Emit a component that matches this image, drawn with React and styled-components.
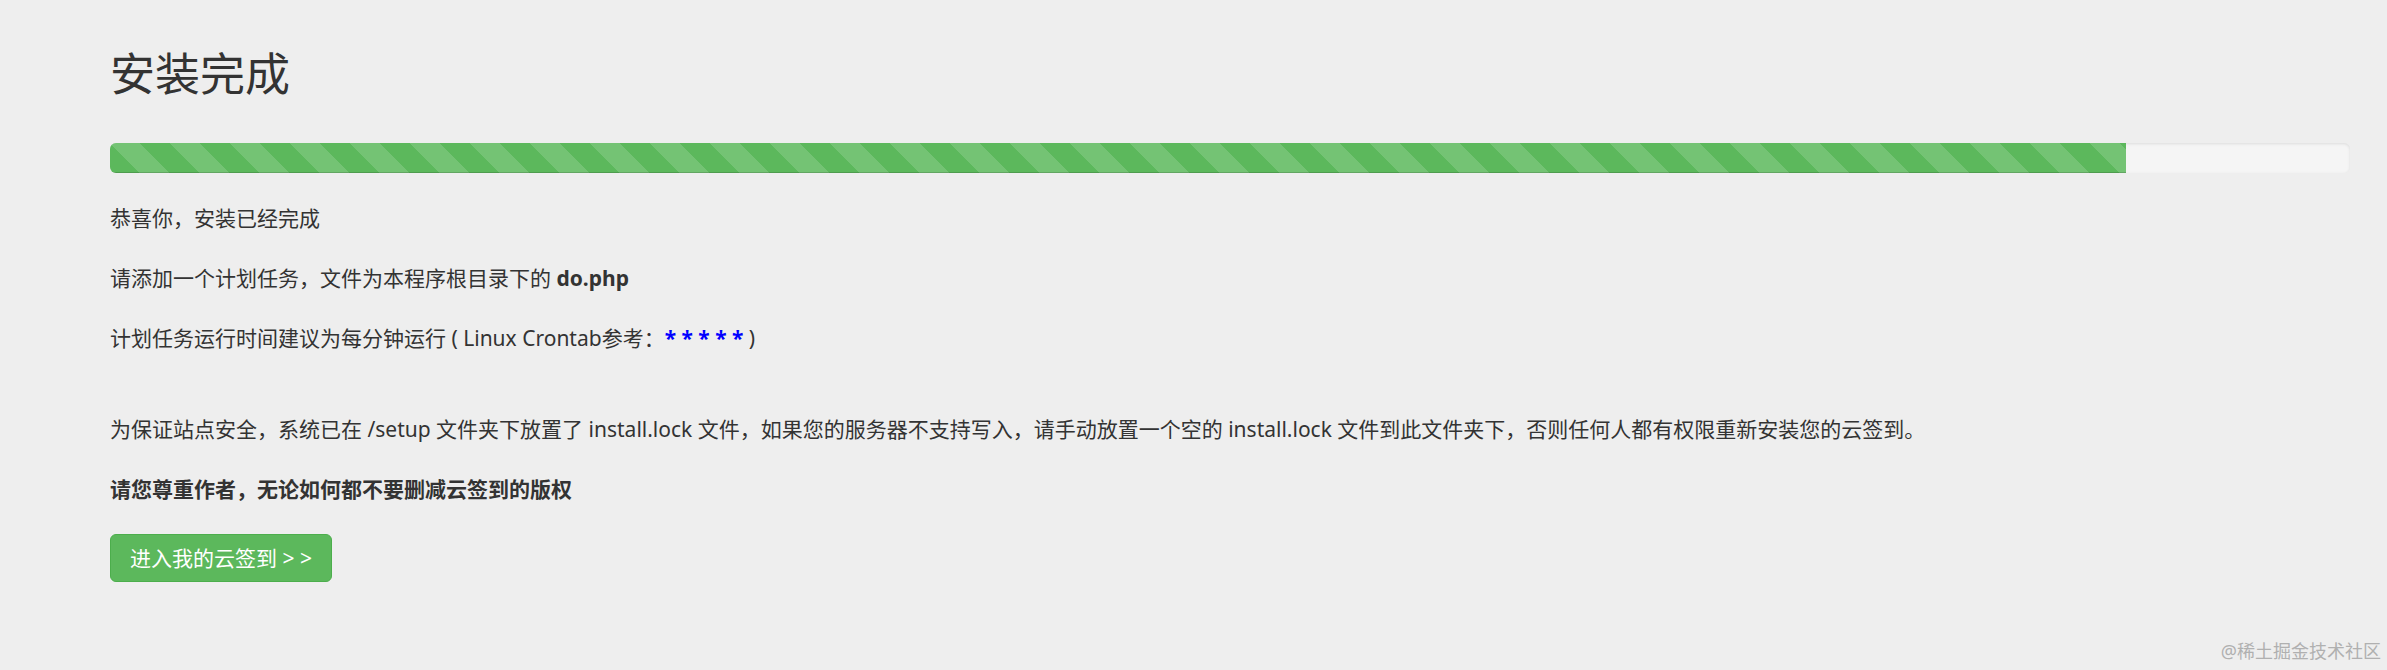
import React from 'react';
import styled, { createGlobalStyle } from 'styled-components';

const GlobalStyle = createGlobalStyle`
    html, body {
        margin: 0;
        padding: 0;
        background: #eeeeee;
    }
    body {
        font-family: "Noto Sans", "Noto Sans CJK SC", sans-serif;
        color: #333333;
    }
`;

function App() {
    const progress = 90;

    return (
        <>
            <GlobalStyle />
            <Page>
                <Title>安装完成</Title>
                <Progress>
                    <Bar $percent={progress} />
                </Progress>
                <Text>恭喜你，安装已经完成</Text>
                <Text>请添加一个计划任务，文件为本程序根目录下的 <strong>do.php</strong></Text>
                <Text>
                    计划任务运行时间建议为每分钟运行 ( Linux Crontab参考：<Cron>* * * * *</Cron> )
                </Text>
                <Text $gap>
                    为保证站点安全，系统已在 /setup 文件夹下放置了 install.lock 文件，如果您的服务器不支持写入，请手动放置一个空的 install.lock 文件到此文件夹下，否则任何人都有权限重新安装您的云签到。
                </Text>
                <Text><strong>请您尊重作者，无论如何都不要删减云签到的版权</strong></Text>
                <Button type="button">进入我的云签到 &gt; &gt;</Button>
                <Watermark>@稀土掘金技术社区</Watermark>
            </Page>
        </>
    );
}

const Page = styled.div`
    position: relative;
    box-sizing: border-box;
    min-height: 100vh;
    padding: 49px 37px 0 110px;
    display: flex;
    flex-direction: column;
    align-items: flex-start;
`;

const Title = styled.h2`
    margin: 0 0 44px;
    font-size: 45px;
    line-height: 50px;
    font-weight: 400;
    color: #333333;
`;

const Progress = styled.div`
    align-self: stretch;
    height: 30px;
    margin-bottom: 30px;
    border-radius: 6px;
    overflow: hidden;
    background: #f5f5f5;
    box-shadow: inset 0 1px 3px rgba(0, 0, 0, 0.1);
`;

const Bar = styled.div`
    width: ${p => p.$percent}%;
    height: 100%;
    background-color: #5cb85c;
    background-image: linear-gradient(
        45deg,
        rgba(255, 255, 255, 0.15) 25%,
        transparent 25%,
        transparent 50%,
        rgba(255, 255, 255, 0.15) 50%,
        rgba(255, 255, 255, 0.15) 75%,
        transparent 75%,
        transparent
    );
    background-size: 60px 60px;
    box-shadow: inset 0 -1px 0 rgba(0, 0, 0, 0.15);
`;

const Text = styled.p`
    margin: ${p => (p.$gap ? '31px' : '0')} 0 30px;
    font-size: 21px;
    line-height: 30px;
    strong {
        font-weight: 700;
    }
`;

const Cron = styled.span`
    color: #0000ff;
    font-weight: 700;
`;

const Button = styled.button`
    height: 48px;
    padding: 0 19px;
    font-family: inherit;
    font-size: 21px;
    line-height: 46px;
    color: #ffffff;
    background: #5cb85c;
    border: 1px solid #4cae4c;
    border-radius: 6px;
    cursor: pointer;
`;

const Watermark = styled.div`
    position: absolute;
    right: 6px;
    bottom: 8px;
    font-size: 18px;
    line-height: 22px;
    color: #b0b0b0;
`;

export default App;
